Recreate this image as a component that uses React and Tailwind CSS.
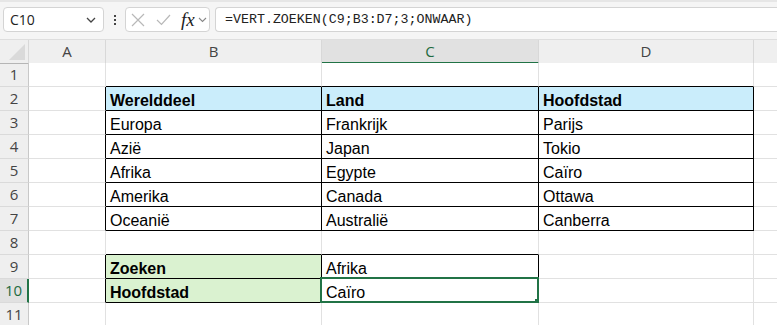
import React from "react";

const cols = [
  { key: "A", w: "w-[77px]" },
  { key: "B", w: "w-[216px]" },
  { key: "C", w: "w-[217px]" },
  { key: "D", w: "w-[215px]" },
  { key: "E", w: "w-[60px]" },
];

const data = {
  2: { B: "Werelddeel", C: "Land", D: "Hoofdstad" },
  3: { B: "Europa", C: "Frankrijk", D: "Parijs" },
  4: { B: "Azië", C: "Japan", D: "Tokio" },
  5: { B: "Afrika", C: "Egypte", D: "Caïro" },
  6: { B: "Amerika", C: "Canada", D: "Ottawa" },
  7: { B: "Oceanië", C: "Australië", D: "Canberra" },
  9: { B: "Zoeken", C: "Afrika" },
  10: { B: "Hoofdstad", C: "Caïro" },
};

function inTable(r, c) {
  if (r >= 2 && r <= 7 && (c === "B" || c === "C" || c === "D")) return true;
  if ((r === 9 || r === 10) && (c === "B" || c === "C")) return true;
  return false;
}

function Cell({ r, c }) {
  const t = inTable(r, c);
  const rightBlack = t || inTable(r, String.fromCharCode(c.charCodeAt(0) + 1));
  const bottomBlack = t || inTable(r + 1, c);
  const bold = (r === 2 && t) || ((r === 9 || r === 10) && c === "B");
  let bg = "bg-white";
  if (r === 2 && t) bg = "bg-[#caedfb]";
  if ((r === 9 || r === 10) && c === "B") bg = "bg-[#daf2d0]";
  const rb = rightBlack ? "border-r-black" : "border-r-[#e1e1e1]";
  const bb = bottomBlack ? "border-b-black" : "border-b-[#e1e1e1]";
  const w = cols.find((x) => x.key === c).w;
  const text = data[r] && data[r][c];
  const selected = r === 10 && c === "C";
  return (
    <div
      className={`relative h-[24px] shrink-0 ${w} border-r border-b ${rb} ${bb} ${bg} flex items-end px-[4px] text-[16px] leading-[19px] text-black ${bold ? "font-bold" : ""}`}
    >
      <span className="whitespace-nowrap">{text}</span>
      {selected && (
        <div className="absolute -left-[2px] -top-[2px] -right-[1px] -bottom-[1px] border-2 border-[#217346]">
          <div className="absolute -right-[4px] -bottom-[4px] w-[6px] h-[6px] bg-[#217346]" />
        </div>
      )}
    </div>
  );
}

export default function App() {
  const rows = [1, 2, 3, 4, 5, 6, 7, 8, 9, 10, 11];
  return (
    <div
      className="w-[777px] h-[325px] overflow-hidden bg-white"
      style={{ fontFamily: "'Liberation Sans', Arial, sans-serif" }}
    >
      {/* Toolbar */}
      <div className="h-[39px] bg-[#f5f5f5] border-t-2 border-t-[#e6e6e6] flex items-start pt-[5px] pl-[3px] gap-0">
        <div className="w-[101px] h-[25px] bg-white border border-[#d4d4d4] rounded-[4px] flex items-center justify-between pl-[6px] pr-[7px]">
          <span className="text-[14px] text-[#222]" style={{ fontFamily: "'Open Sans', sans-serif" }}>C10</span>
          <svg width="10" height="6" viewBox="0 0 10 6" fill="none">
            <path d="M1 1l4 4 4-4" stroke="#444" strokeWidth="1.3" />
          </svg>
        </div>
        <div className="w-[21px] h-[25px] flex flex-col items-center justify-center gap-[2px]">
          <div className="w-[2px] h-[2px] bg-[#444]" />
          <div className="w-[2px] h-[2px] bg-[#444]" />
          <div className="w-[2px] h-[2px] bg-[#444]" />
        </div>
        <div className="w-[85px] h-[25px] bg-white border border-[#d4d4d4] rounded-[4px] flex items-center pl-[5px] mr-[5px]">
          <svg width="14" height="14" viewBox="0 0 14 14" fill="none" className="mr-[11px]">
            <path d="M1 1l12 12M13 1L1 13" stroke="#b8b8b8" strokeWidth="1.2" />
          </svg>
          <svg width="15" height="12" viewBox="0 0 15 12" fill="none" className="mr-[10px]">
            <path d="M1 6l4.5 4.5L14 1" stroke="#b8b8b8" strokeWidth="1.2" />
          </svg>
          <span className="text-[19px] italic text-[#222] leading-none mr-[3px]" style={{ fontFamily: "'Liberation Serif', serif" }}>fx</span>
          <svg width="9" height="6" viewBox="0 0 9 6" fill="none">
            <path d="M1 1l3.5 3.5L8 1" stroke="#888" strokeWidth="1.1" />
          </svg>
        </div>
        <div className="flex-1 h-[25px] bg-white border border-[#d4d4d4] rounded-l-[4px] border-r-0 flex items-center pl-[9px]">
          <span className="text-[13.3px] text-[#222] whitespace-nowrap" style={{ fontFamily: "'Liberation Mono', monospace" }}>
            =VERT.ZOEKEN(C9;B3:D7;3;ONWAAR)
          </span>
        </div>
      </div>

      {/* Column headers */}
      <div className="flex h-[24px] border-t border-t-[#dedede]" style={{ fontFamily: "'Open Sans', sans-serif" }}>
        <div className="w-[29px] shrink-0 h-[24px] bg-[#efefef] border-r border-r-[#d8d8d8] border-b border-b-[#b5b5b5] relative">
          <svg width="16" height="16" viewBox="0 0 16 16" className="absolute right-[3px] bottom-[3px]">
            <path d="M16 0L16 16L0 16Z" fill="#dadada" />
          </svg>
        </div>
        {cols.map((c) => {
          const sel = c.key === "C";
          return (
            <div
              key={c.key}
              className={`${c.w} shrink-0 h-[24px] flex items-center justify-center text-[15px] border-r border-r-[#d8d8d8] ${sel ? "bg-[#e1e1e1] text-[#1e6b40] border-b-2 border-b-[#217346]" : "bg-[#efefef] text-[#444] border-b border-b-[#b5b5b5]"}`}
            >
              {c.key === "E" ? "" : c.key}
            </div>
          );
        })}
      </div>

      {/* Rows */}
      {rows.map((r) => {
        const sel = r === 10;
        return (
          <div key={r} className="flex h-[24px]">
            <div
              className={`w-[29px] shrink-0 h-[24px] flex items-center justify-center text-[15px] border-b border-b-[#dadada] ${sel ? "bg-[#e1e1e1] text-[#1e6b40] border-r-2 border-r-[#217346]" : "bg-[#efefef] text-[#444] border-r border-r-[#c8c8c8]"}`}
              style={{ fontFamily: "'Open Sans', sans-serif" }}
            >
              {r}
            </div>
            {cols.map((c) => (
              <Cell key={c.key} r={r} c={c.key} />
            ))}
          </div>
        );
      })}
    </div>
  );
}
